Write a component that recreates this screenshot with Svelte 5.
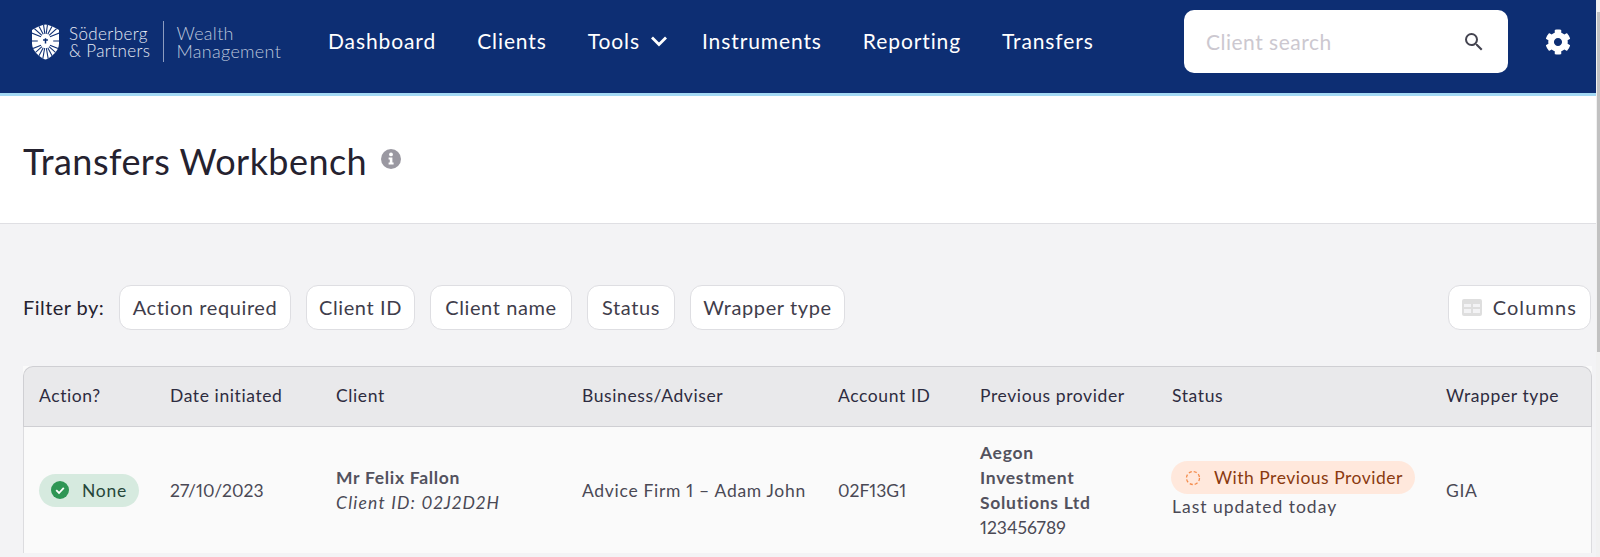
<script>
  const nav = ['Dashboard', 'Clients', 'Tools', 'Instruments', 'Reporting', 'Transfers'];
  const filters = [
    { label: 'Action required', width: 172 },
    { label: 'Client ID', width: 109 },
    { label: 'Client name', width: 142 },
    { label: 'Status', width: 88 },
    { label: 'Wrapper type', width: 155 }
  ];
  const columns = ['Action?', 'Date initiated', 'Client', 'Business/Adviser', 'Account ID', 'Previous provider', 'Status', 'Wrapper type'];
  const fan = (cx, cy, angles, inner) =>
    angles.map((a) => {
      const r = (a * Math.PI) / 180;
      return { x1: cx + inner * Math.cos(r), y1: cy + inner * Math.sin(r), x2: cx + 30 * Math.cos(r), y2: cy + 30 * Math.sin(r) };
    });
  const rays = [
    ...fan(14, 15, [-158, -138, -118, -98, -82, -62, -42, -22], 5),
    ...fan(14, 20, [22, 42, 62, 80, 100, 118, 138, 158], 5),
    ...fan(14, 17.5, [0, 180], 8)
  ];
</script>

<div class="page">
  <main class="main">
    <header class="topbar">
      <div class="logo">
        <svg class="crest" viewBox="0 0 28 37" aria-hidden="true">
          <defs>
            <clipPath id="crest-clip">
              <path d="M0 6C5 3 9 1 14 0C19 1 23 3 28 6L28 20C28 28 20 34 14 37C8 34 0 28 0 20Z" />
            </clipPath>
          </defs>
          <g clip-path="url(#crest-clip)">
            <rect width="28" height="37" fill="#fff" />
            {#each rays as ray}
              <line x1={ray.x1} y1={ray.y1} x2={ray.x2} y2={ray.y2} stroke="#0d2e73" stroke-width="1.1" />
            {/each}
            <path d="M11.5 16.5H16.5M14 14.5V20" stroke="#0d2e73" stroke-width="1.5" />
          </g>
        </svg>
        <div class="brand"><span>Söderberg</span><span>&amp; Partners</span></div>
        <div class="brand-rule"></div>
        <div class="brand-sub"><span>Wealth</span><span>Management</span></div>
      </div>

      <nav class="nav">
        {#each nav as item}
          <a href="#top" class="nav-link">
            {item}
            {#if item === 'Tools'}
              <svg class="chevron" viewBox="0 0 18 12" aria-hidden="true"><path d="M2 2.5L9 9.5L16 2.5" fill="none" stroke="#fff" stroke-width="2.8" /></svg>
            {/if}
          </a>
        {/each}
      </nav>

      <div class="search">
        <span>Client search</span>
        <svg viewBox="0 0 24 24" aria-hidden="true"><path fill="#444450" d="M15.5 14h-.79l-.28-.27A6.47 6.47 0 0 0 16 9.5 6.5 6.5 0 1 0 9.5 16c1.61 0 3.09-.59 4.23-1.57l.27.28v.79l5 4.99L20.49 19l-4.99-5zm-6 0C7.01 14 5 11.99 5 9.5S7.01 5 9.5 5 14 7.01 14 9.5 11.99 14 9.5 14z" /></svg>
      </div>

      <svg class="gear" viewBox="0 0 512 512" aria-hidden="true"><path fill="#fff" d="M487.4 315.7l-42.6-24.6c4.3-23.2 4.3-47 0-70.2l42.6-24.6c4.9-2.8 7.1-8.6 5.5-14-11.1-35.6-30-67.8-54.7-94.6-3.8-4.1-10-5.1-14.8-2.3L380.8 110c-17.9-15.4-38.5-27.3-60.8-35.1V25.8c0-5.6-3.9-10.5-9.4-11.7-36.7-8.2-74.3-7.8-109.2 0-5.5 1.2-9.4 6.1-9.4 11.7V75c-22.2 7.9-42.8 19.8-60.8 35.1L88.7 85.5c-4.9-2.8-11-1.9-14.8 2.3-24.7 26.7-43.6 58.9-54.7 94.6-1.7 5.4.6 11.2 5.5 14L67.3 221c-4.3 23.2-4.3 47 0 70.2l-42.6 24.6c-4.9 2.8-7.1 8.6-5.5 14 11.1 35.6 30 67.8 54.7 94.6 3.8 4.1 10 5.1 14.8 2.3l42.6-24.6c17.9 15.4 38.5 27.3 60.8 35.1v49.2c0 5.6 3.9 10.5 9.4 11.7 36.7 8.2 74.3 7.8 109.2 0 5.5-1.2 9.4-6.1 9.4-11.7v-49.2c22.2-7.9 42.8-19.8 60.8-35.1l42.6 24.6c4.9 2.8 11 1.9 14.8-2.3 24.7-26.7 43.6-58.9 54.7-94.6 1.5-5.5-.7-11.3-5.6-14.1zM256 336c-44.1 0-80-35.9-80-80s35.9-80 80-80 80 35.9 80 80-35.9 80-80 80z" /></svg>
    </header>

    <section class="title-band">
      <h1>Transfers Workbench</h1>
      <svg class="info" viewBox="0 0 20 20" aria-hidden="true">
        <circle cx="10" cy="10" r="10" fill="#9a98a1" />
        <circle cx="10" cy="5.4" r="1.9" fill="#fff" />
        <path d="M7.6 8.4H11.4V13.6H12.6V15.6H7.6V13.6H8.8V10.4H7.6Z" fill="#fff" />
      </svg>
    </section>

    <section class="content">
      <div class="filters">
        <span class="filter-label">Filter by:</span>
        {#each filters as filter}
          <button class="chip" type="button" style="width: {filter.width}px">{filter.label}</button>
        {/each}
        <button class="chip columns" type="button">
          <svg viewBox="0 0 20 17" aria-hidden="true">
            <rect width="20" height="17" rx="2" fill="#dedede" />
            <path d="M2 5H9V8H2ZM11 5H18V8H11ZM2 10H9V14H2ZM11 10H18V14H11Z" fill="#f3f3f5" />
          </svg>
          Columns
        </button>
      </div>

      <table class="grid">
        <colgroup>
          <col class="c1" /><col class="c2" /><col class="c3" /><col class="c4" /><col class="c5" /><col class="c6" /><col class="c7" /><col />
        </colgroup>
        <thead>
          <tr>
            {#each columns as column}<th>{column}</th>{/each}
          </tr>
        </thead>
        <tbody>
          <tr>
            <td>
              <span class="pill none">
                <svg viewBox="0 0 18 18" aria-hidden="true">
                  <circle cx="9" cy="9" r="9" fill="#2f9655" />
                  <path d="M5.2 9.2L8 12L12.8 6.8" fill="none" stroke="#fff" stroke-width="1.8" />
                </svg>
                None
              </span>
            </td>
            <td class="num">27/10/2023</td>
            <td class="client">
              <strong>Mr Felix Fallon</strong>
              <em>Client ID: 02J2D2H</em>
            </td>
            <td>Advice Firm 1 – Adam John</td>
            <td class="num">02F13G1</td>
            <td class="provider">
              <strong>Aegon Investment Solutions Ltd</strong>
              <span class="num">123456789</span>
            </td>
            <td class="status">
              <span class="pill pending">
                <svg viewBox="0 0 16 16" aria-hidden="true">
                  <circle cx="8" cy="8" r="6.5" fill="none" stroke="#f48c4c" stroke-width="1.3" stroke-dasharray="3.1 2" />
                </svg>
                With Previous Provider
              </span>
              <span class="updated">Last updated today</span>
            </td>
            <td>GIA</td>
          </tr>
        </tbody>
      </table>
    </section>
  </main>
  <div class="scrollbar"><div class="thumb"></div></div>
</div>

<style>
  :global(body) {
    margin: 0;
    overflow: hidden;
    background: #f3f3f5;
  }
  .page {
    display: flex;
    height: 557px;
    overflow: hidden;
    font-family: Lato, "Noto Sans", sans-serif;
    color: #25222f;
  }
  .main {
    width: 1596px;
    flex: none;
    min-width: 0;
  }
  .scrollbar {
    flex: 1;
    padding-top: 12px;
    padding-left: 1px;
    background: #f1f1f1;
  }
  .thumb {
    height: 340px;
    background: #c1c1c1;
  }

  .topbar {
    display: flex;
    align-items: center;
    height: 83px;
    padding-bottom: 10px;
    background: #0d2e73;
    border-bottom: 3px solid #a3d9f4;
    color: #fff;
  }
  .logo {
    display: flex;
    align-items: center;
    width: 328px;
    padding-left: 32px;
    box-sizing: border-box;
    flex: none;
  }
  .crest {
    width: 27px;
    height: 36px;
    margin-right: 10px;
    flex: none;
  }
  .brand,
  .brand-sub {
    display: flex;
    flex-direction: column;
    font-weight: 300;
    white-space: nowrap;
    line-height: 17px;
  }
  .brand {
    font-size: 17px;
    letter-spacing: 0.4px;
    color: #e6eaf3;
  }
  .brand-rule {
    width: 1px;
    height: 41px;
    margin: 0 12px 0 13px;
    background: #8c9cc0;
  }
  .brand-sub {
    font-size: 18px;
    line-height: 18px;
    letter-spacing: 0.3px;
    color: #bcc6dc;
  }
  .nav {
    display: flex;
    align-items: center;
    gap: 41px;
    width: 856px;
    margin-bottom: 2px;
    flex: none;
  }
  .nav-link {
    display: flex;
    align-items: center;
    gap: 10px;
    color: #fff;
    text-decoration: none;
    font-size: 21px;
    letter-spacing: 0.9px;
    white-space: nowrap;
  }
  .chevron {
    width: 18px;
    height: 12px;
    margin-right: -7px;
  }
  .search {
    display: flex;
    align-items: center;
    justify-content: space-between;
    box-sizing: border-box;
    width: 324px;
    height: 63px;
    padding: 0 22px 0 22px;
    border-radius: 10px;
    background: #fff;
    color: #ccc8d0;
    font-size: 21px;
    letter-spacing: 0.5px;
    flex: none;
  }
  .search svg {
    width: 24px;
    height: 24px;
  }
  .gear {
    width: 26px;
    height: 26px;
    margin-left: 37px;
    flex: none;
  }

  .title-band {
    display: flex;
    align-items: flex-start;
    gap: 14px;
    box-sizing: border-box;
    height: 128px;
    padding: 44px 0 0 23px;
    background: #fff;
    border-bottom: 1px solid #dfdfe3;
  }
  h1 {
    margin: 0;
    font-size: 36px;
    line-height: 42px;
    font-weight: 400;
    letter-spacing: 0.45px;
  }
  .info {
    width: 20px;
    height: 20px;
    margin-top: 9px;
  }

  .content {
    padding: 60px 4px 0 23px;
  }
  .filters {
    display: flex;
    align-items: center;
    gap: 15px;
    height: 46px;
    margin-bottom: 36px;
  }
  .filter-label {
    width: 81px;
    font-size: 20px;
    letter-spacing: 0.45px;
    white-space: nowrap;
    color: #25222f;
  }
  .chip {
    box-sizing: border-box;
    height: 45px;
    padding: 0;
    border: 1px solid #dedee2;
    border-radius: 12px;
    background: #fff;
    font: inherit;
    font-size: 20px;
    letter-spacing: 0.6px;
    white-space: nowrap;
    color: #3f3d4b;
  }
  .columns {
    display: flex;
    align-items: center;
    gap: 11px;
    margin-left: auto;
    margin-right: 1px;
    padding: 0 13px;
    letter-spacing: 1.1px;
  }
  .columns svg {
    width: 20px;
    height: 17px;
  }

  .grid {
    width: 1569px;
    table-layout: fixed;
    border-collapse: separate;
    border-spacing: 0;
    font-size: 17.5px;
    letter-spacing: 0.7px;
    font-variant-numeric: proportional-nums;
    color: #4a4955;
    background: #fafafa;
  }
  .c1 { width: 131px; }
  .c2 { width: 166px; }
  .c3 { width: 246px; }
  .c4 { width: 256px; }
  .c5 { width: 142px; }
  .c6 { width: 192px; }
  .c7 { width: 274px; }
  th {
    height: 56px;
    padding: 0 0 3px 16px;
    background: #e9e9eb;
    border-top: 1px solid #cfcfd3;
    border-bottom: 1px solid #cfcfd3;
    text-align: left;
    font-weight: 400;
    letter-spacing: 0.6px;
    color: #2e2c40;
    white-space: nowrap;
  }
  th:first-child {
    padding-left: 15px;
    border-left: 1px solid #cfcfd3;
    border-top-left-radius: 10px;
  }
  th:last-child {
    border-right: 1px solid #cfcfd3;
    border-top-right-radius: 10px;
  }
  td {
    height: 126px;
    padding: 0 0 0 16px;
    white-space: nowrap;
    vertical-align: middle;
  }
  td:first-child {
    padding-left: 15px;
    border-left: 1px solid #dcdcdf;
  }
  td:last-child {
    border-right: 1px solid #dcdcdf;
  }
  .num {
    letter-spacing: 0;
  }
  .client strong,
  .client em {
    display: block;
    line-height: 25px;
  }
  .client em {
    letter-spacing: 1.2px;
  }
  .provider {
    white-space: normal;
    line-height: 25px;
    padding-right: 40px;
  }
  .provider strong,
  .provider span,
  .updated {
    display: block;
  }
  strong {
    font-weight: 700;
    color: #53525e;
  }
  .pill {
    display: inline-flex;
    align-items: center;
    height: 33px;
    border-radius: 17px;
    box-sizing: border-box;
    white-space: nowrap;
  }
  .none {
    gap: 13px;
    padding: 0 12px 0 12px;
    background: #d6eadf;
    color: #27473a;
  }
  .none svg {
    width: 18px;
    height: 18px;
  }
  .pending {
    gap: 13px;
    margin-left: -1px;
    padding: 0 12px 0 14px;
    background: #ffe8dc;
    color: #8a3a10;
    letter-spacing: 0.5px;
  }
  .pending svg {
    width: 16px;
    height: 16px;
  }
  .updated {
    line-height: 25px;
    letter-spacing: 1px;
  }
</style>
